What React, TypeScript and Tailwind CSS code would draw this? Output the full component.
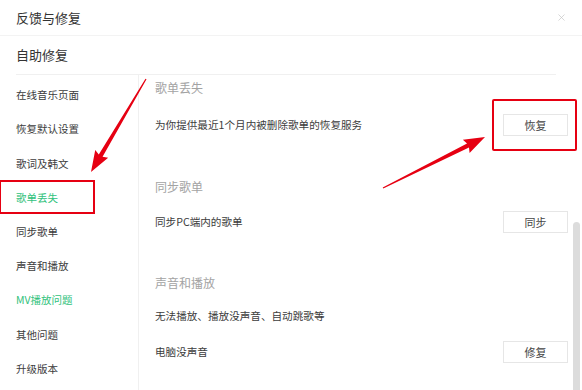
import { X } from 'lucide-react'

const NAV = [
  { label: '在线音乐页面' },
  { label: '恢复默认设置' },
  { label: '歌词及韩文' },
  { label: '歌单丢失', active: true },
  { label: '同步歌单' },
  { label: '声音和播放' },
  { label: 'MV播放问题', active: true },
  { label: '其他问题' },
  { label: '升级版本' },
]

const FONT = { fontFamily: '"Microsoft YaHei", "Noto Sans CJK SC", "Noto Sans", sans-serif' }

// red annotation arrow: thin tail, widening shaft, triangular head
function arrowPoints(tx: number, ty: number, hx: number, hy: number) {
  const dx = hx - tx
  const dy = hy - ty
  const len = Math.hypot(dx, dy)
  const ux = dx / len
  const uy = dy / len
  const px = -uy
  const py = ux
  const bx = hx - ux * 19
  const by = hy - uy * 19
  const pts = [
    [tx + px * 0.6, ty + py * 0.6],
    [bx + px * 2.2, by + py * 2.2],
    [bx + px * 7.5 - ux * 2, by + py * 7.5 - uy * 2],
    [hx, hy],
    [bx - px * 7.5 - ux * 2, by - py * 7.5 - uy * 2],
    [bx - px * 2.2, by - py * 2.2],
    [tx - px * 0.6, ty - py * 0.6],
  ]
  return pts.map((p) => p.join(',')).join(' ')
}

function ActionButton({ label }: { label: string }) {
  return (
    <button className="w-[65px] h-[22px] border border-[#e6e6e6] bg-white text-[11px] text-[#444] leading-none">
      {label}
    </button>
  )
}

export default function App() {
  return (
    <div className="relative w-[582px] h-[390px] bg-white overflow-hidden flex flex-col" style={FONT}>
      {/* Header */}
      <div className="h-[36px] shrink-0 flex items-center justify-between pl-4 pr-[15px] border-b border-[#f3f3f3]">
        <span className="text-[13px] text-[#333]">反馈与修复</span>
        <X className="w-[11px] h-[11px] text-[#c4c4c4]" strokeWidth={1.5} />
      </div>

      {/* Sub header */}
      <div className="h-[39px] shrink-0 flex items-center ml-4 mr-[26px] border-b border-[#f0f0f0]">
        <span className="text-[13px] text-[#333]">自助修复</span>
      </div>

      <div className="flex flex-1 min-h-0">
        {/* Nav */}
        <div className="w-[139px] shrink-0 border-r border-[#f0f0f0] pt-[3px]">
          {NAV.map((item) => (
            <div
              key={item.label}
              className={`h-[34.2px] flex items-center pl-4 text-[10.5px] ${
                item.active ? 'text-[#31c27c]' : 'text-[#3c3c3c]'
              }`}
            >
              {item.label}
            </div>
          ))}
        </div>

        {/* Content */}
        <div className="flex-1 min-w-0 pl-4 flex flex-col">
          <div className="h-[26px] flex items-center text-[12px] text-[#a3a3a3]">歌单丢失</div>
          <div className="h-[48px] flex items-center justify-between">
            <span className="text-[10.6px] text-[#3c3c3c]">为你提供最近1个月内被删除歌单的恢复服务</span>
            <ActionButton label="恢复" />
          </div>

          <div className="h-[26px] mt-[25px] flex items-center text-[12px] text-[#a3a3a3]">同步歌单</div>
          <div className="h-[44px] flex items-center justify-between">
            <span className="text-[10.6px] text-[#3c3c3c]">同步PC端内的歌单</span>
            <ActionButton label="同步" />
          </div>

          <div className="h-[26px] mt-[26px] flex items-center text-[12px] text-[#a3a3a3]">声音和播放</div>
          <div className="h-[40px] flex items-center">
            <span className="text-[10.6px] text-[#3c3c3c]">无法播放、播放没声音、自动跳歌等</span>
          </div>
          <div className="h-[32px] flex items-center justify-between">
            <span className="text-[10.6px] text-[#3c3c3c]">电脑没声音</span>
            <ActionButton label="修复" />
          </div>
        </div>

        {/* Scrollbar */}
        <div className="w-[7px] shrink-0 ml-[5px] mr-[2px] pt-[147px] flex flex-col">
          <div className="flex-1 rounded-t-full bg-[#dcdcdc]" />
        </div>
      </div>

      {/* Annotations */}
      <div className="absolute left-[-1px] top-[180px] w-[96px] h-[34px] border-2 border-[#e60012]" />
      <div className="absolute left-[492px] top-[99px] w-[85px] h-[52px] border-2 border-[#e60012] rounded-[2px]" />
      <svg className="absolute inset-0 pointer-events-none" width="582" height="390">
        <polygon points={arrowPoints(146, 79, 91, 172)} fill="#e60012" />
        <polygon points={arrowPoints(383, 188, 485, 137)} fill="#e60012" />
      </svg>
    </div>
  )
}
